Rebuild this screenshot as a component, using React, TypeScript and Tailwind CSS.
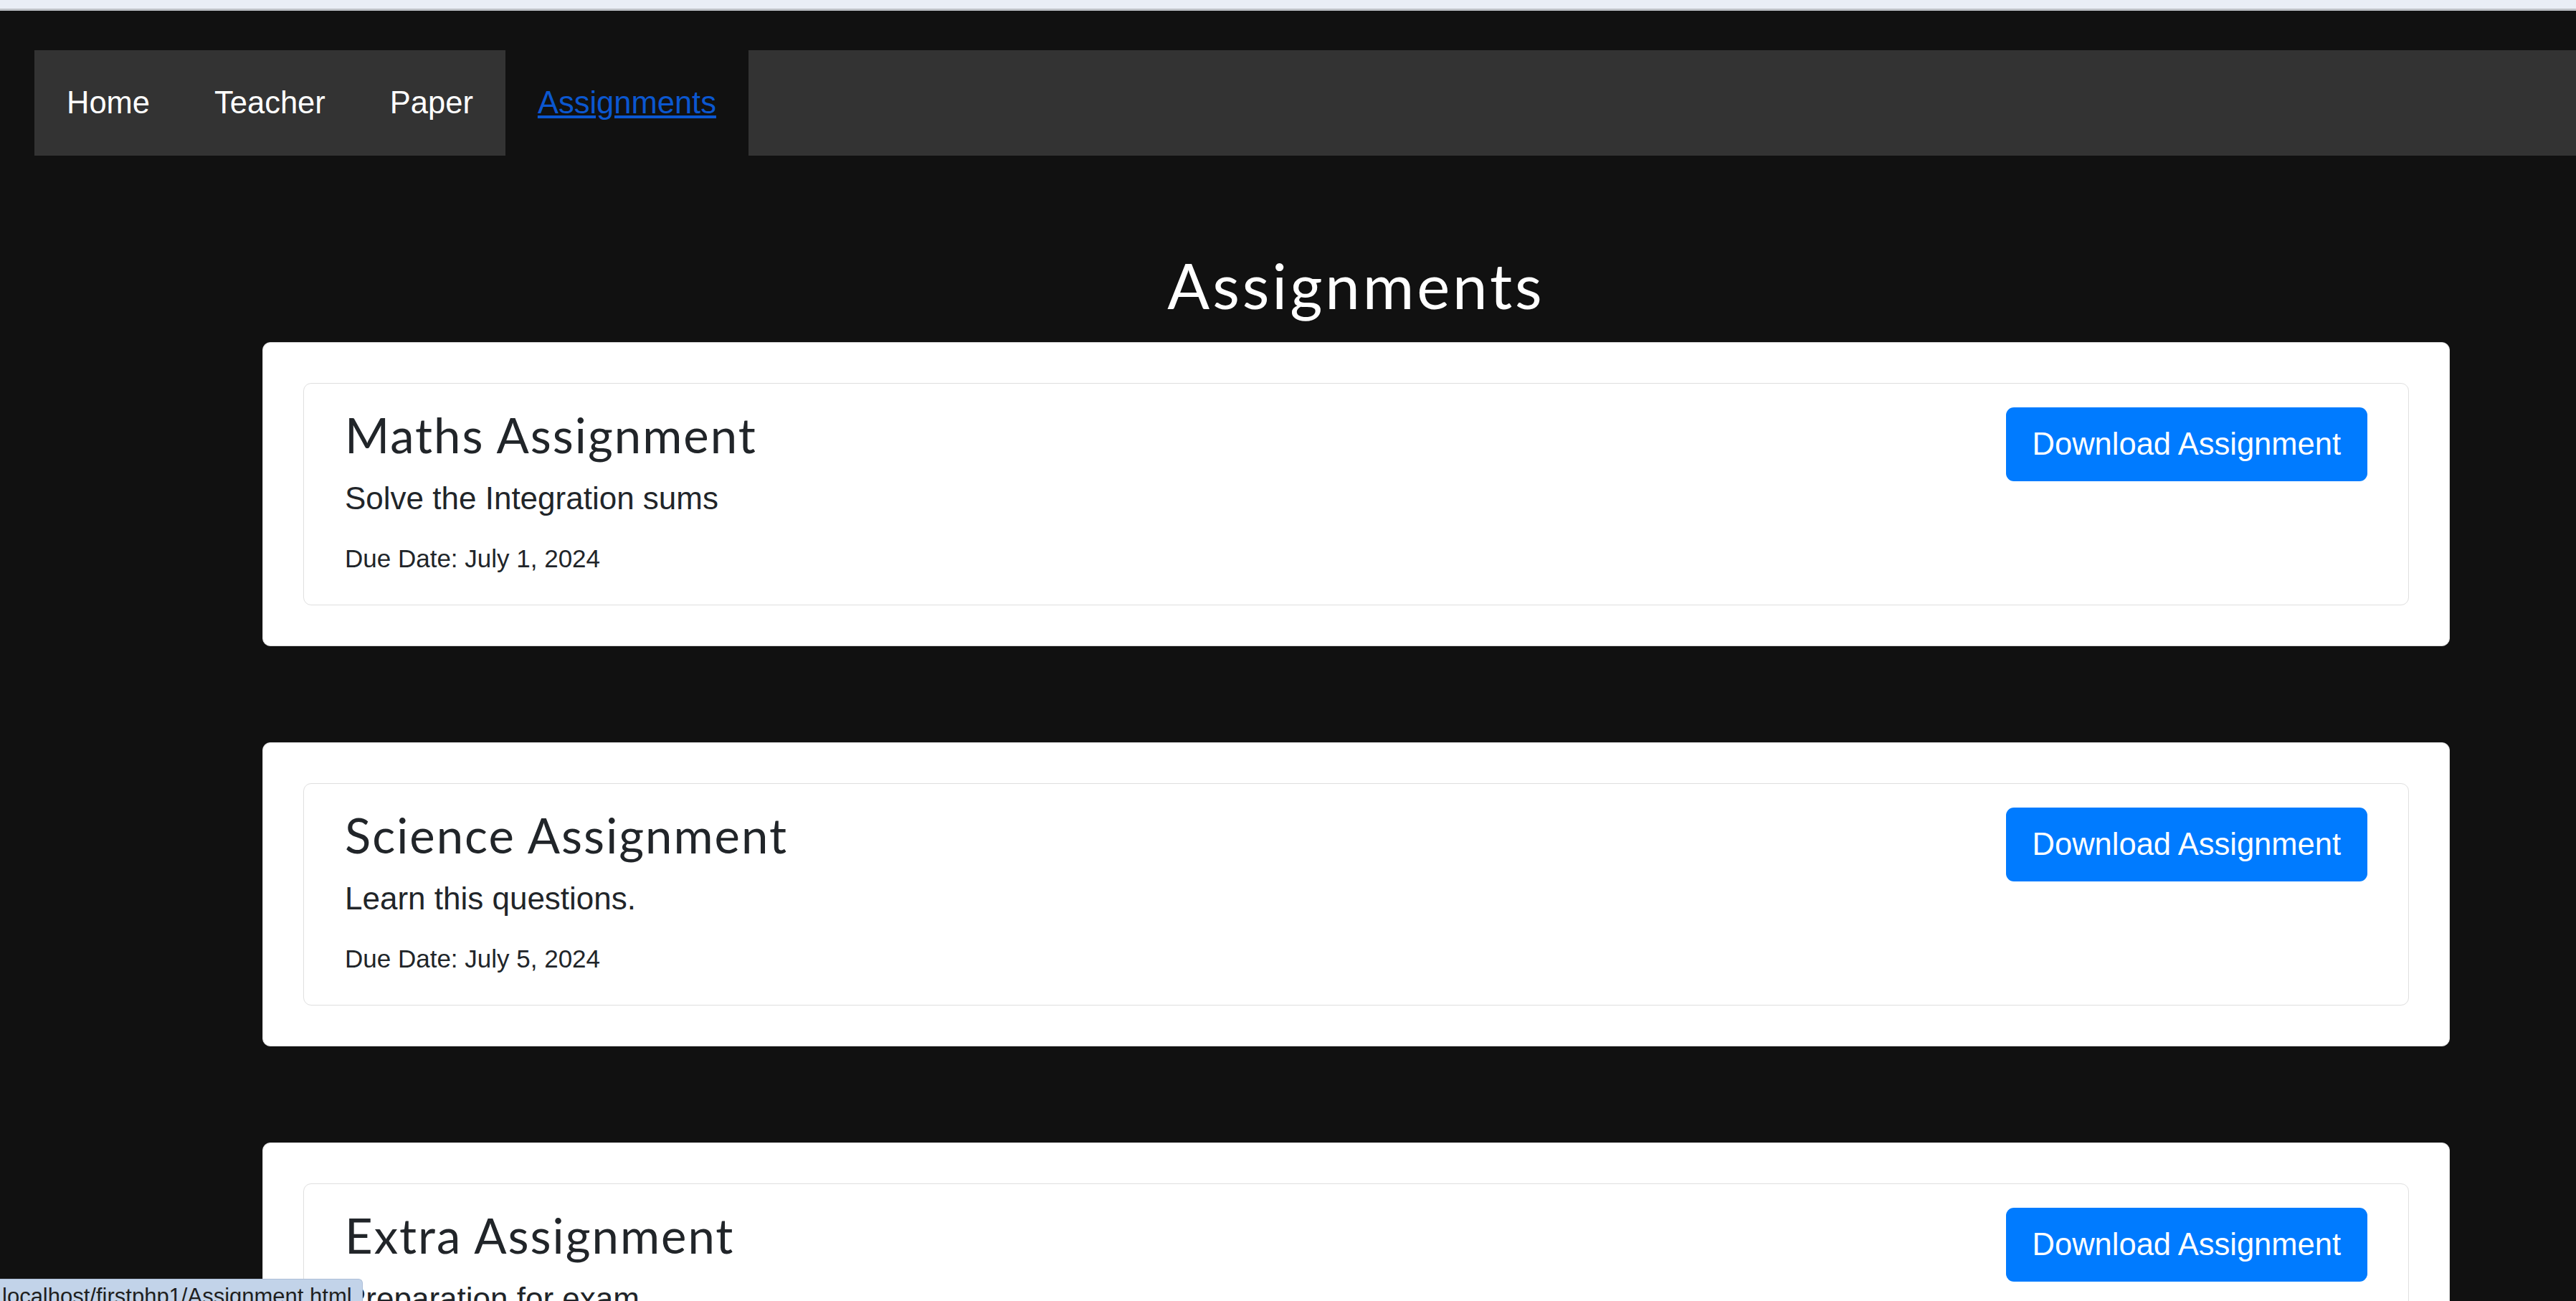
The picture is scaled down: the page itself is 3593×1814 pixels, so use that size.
import React from "react";

const assignments = [
  { title: "Maths Assignment", text: "Solve the Integration sums", due: "July 1, 2024" },
  { title: "Science Assignment", text: "Learn this questions.", due: "July 5, 2024" },
  { title: "Extra Assignment", text: "Preparation for exam", due: "July 10, 2024" },
];

const navItems = ["Home", "Teacher", "Paper"];

const App = () => {
  return (
    <div className="relative h-screen overflow-hidden bg-[#111111] font-['Liberation_Sans',Arial,sans-serif]">
      {/* browser strip */}
      <div className="h-[12px] bg-[#e9eef6]" />
      <div className="h-[3px] bg-[#bdc1c6]" />

      {/* Nav */}
      <ul className="ml-[48px] mt-[55px] flex h-[147px] bg-[#333333]">
        {navItems.map((item) => (
          <li key={item} className="flex items-center px-[45px] text-[43.5px] text-white">
            <a href="#">{item}</a>
          </li>
        ))}
        <li className="flex items-center bg-[#111111] px-[45px] text-[43.5px]">
          <a href="#" className="text-[#0b57d0] underline">
            Assignments
          </a>
        </li>
      </ul>

      {/* Main */}
      <div className="ml-[366px] w-[3051px]">
        <h1 className="mb-[27px] mt-[129px] text-center font-['Lato',sans-serif] text-[87px] leading-[104px] tracking-[0.045em] text-white">
          Assignments
        </h1>

        <div className="flex flex-col gap-[134px]">
          {assignments.map((a) => (
            <div key={a.title} className="rounded-[11px] border border-[#dcdcdc] bg-white p-[56px]">
              <div className="flex items-start justify-between rounded-[11px] border border-[#dfdfdf] px-[57px] pb-[44px] pt-[31px] text-[#212529]">
                <div>
                  <h5 className="font-['Lato',sans-serif] text-[67px] leading-[80px] tracking-[0.03em]">{a.title}</h5>
                  <p className="mt-[23px] text-[44px] leading-[51px]">{a.text}</p>
                  <p className="mt-[39px] text-[35px] leading-[40px]">Due Date: {a.due}</p>
                </div>
                <a
                  href="#"
                  className="mt-[2px] flex h-[103px] items-center rounded-[11px] bg-[#007bff] px-[37px] text-[43.5px] text-white"
                >
                  Download Assignment
                </a>
              </div>
            </div>
          ))}
        </div>
      </div>

      {/* status bubble */}
      <div className="absolute bottom-0 left-0 h-[31px] w-[506px] overflow-hidden rounded-tr-[6px] border-t border-r border-[#aebfd8] bg-[#c2d3e9] pl-[3px] pt-[6px] text-[31px] leading-[36px] text-[#1f1f1f]">
        localhost/firstphp1/Assignment.html
      </div>
    </div>
  );
};

export default App;
